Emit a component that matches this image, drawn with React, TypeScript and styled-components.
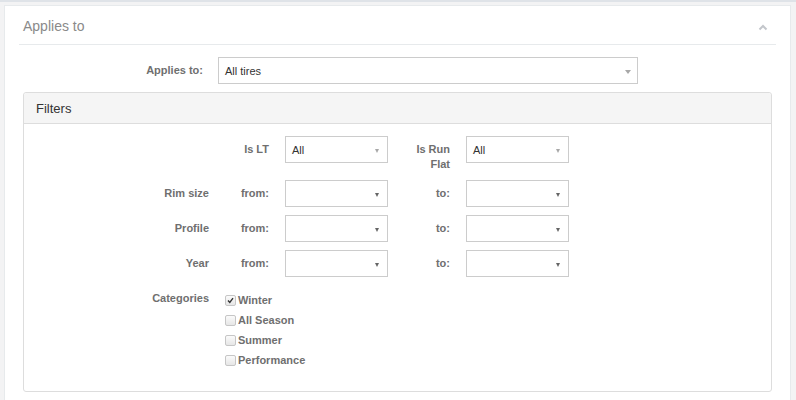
import React from 'react';
import styled, { createGlobalStyle } from 'styled-components';

const GlobalStyle = createGlobalStyle`
  html, body {
    margin: 0;
    padding: 0;
    background: #f3f3f4;
    font-family: "Liberation Sans", Arial, sans-serif;
  }
`;

const Page = styled.div`
  border-top: 2px solid #dfe3e8;
  padding: 3px 5px 0 4px;
  height: 395px;
  overflow: hidden;
`;

const Card = styled.div`
  background: #fff;
  border: 1px solid #e7eaec;
  padding: 0 14px;
  height: 420px;
`;

const CardHeader = styled.div`
  display: flex;
  align-items: center;
  justify-content: space-between;
  box-sizing: border-box;
  height: 39px;
  padding: 2px 4px 0;
  border-bottom: 1px solid #e7eaec;
`;

const CardTitle = styled.h5`
  margin: 0;
  font-size: 14px;
  font-weight: normal;
  color: #8a8a8a;
`;

const Collapse = styled.span`
  display: flex;
  margin-right: 4px;
  margin-top: 2px;
`;

const MainRow = styled.div`
  display: grid;
  grid-template-columns: 184px 420px;
  column-gap: 15px;
  align-items: center;
  margin-top: 12px;
`;

const Label = styled.label<{ $top?: boolean }>`
  font-size: 11px;
  font-weight: bold;
  color: #6f6f6f;
  text-align: right;
  line-height: 15px;
  padding-top: ${(p) => (p.$top ? '6px' : '0')};
`;

const SelectBox = styled.div`
  position: relative;
  box-sizing: border-box;
  height: 27px;
  border: 1px solid #ccc;
  background: #fff;
  display: flex;
  align-items: center;
  padding: 0 6px;
  font-size: 11px;
  color: #333;
`;

const Caret = styled.span<{ $light?: boolean; $wide?: boolean }>`
  position: absolute;
  right: ${(p) => (p.$wide ? '6px' : '8px')};
  top: 50%;
  margin-top: -1px;
  width: 0;
  height: 0;
  border-left: ${(p) => (p.$wide ? '3.5px' : '2.5px')} solid transparent;
  border-right: ${(p) => (p.$wide ? '3.5px' : '2.5px')} solid transparent;
  border-top: 4px solid ${(p) => (p.$light ? '#a8a8a8' : '#666')};
`;

const Panel = styled.div`
  margin: 8px 4px 0;
  border: 1px solid #ddd;
  border-radius: 3px;
  background: #fff;
`;

const PanelHeading = styled.div`
  height: 30px;
  background: #f5f5f5;
  border-bottom: 1px solid #ddd;
  border-radius: 3px 3px 0 0;
  display: flex;
  align-items: center;
  padding-left: 12px;
  font-size: 13px;
  color: #333;
`;

const PanelBody = styled.div`
  display: grid;
  grid-template-columns: 185px 44px 103px 46px 103px;
  column-gap: 16px;
  row-gap: 8px;
  padding: 12px 0 21px;
  align-items: start;
`;

const CheckList = styled.div`
  grid-column: 2 / span 4;
  padding-top: 5px;
`;

const CheckItem = styled.label`
  display: flex;
  align-items: center;
  height: 20px;
  font-size: 11px;
  font-weight: bold;
  color: #6f6f6f;
`;

const Box = styled.span`
  box-sizing: border-box;
  width: 11px;
  height: 11px;
  border: 1px solid #c6c6c6;
  border-radius: 2px;
  background: linear-gradient(#fbfbfb, #e6e6e6);
  margin-right: 2px;
  display: flex;
  align-items: center;
  justify-content: center;
`;

const Select = ({ value, light }: { value?: string; light?: boolean }) => (
  <SelectBox>
    {value}
    <Caret $light={light} />
  </SelectBox>
);

const Checkbox = ({ label, checked }: { label: string; checked?: boolean }) => (
  <CheckItem>
    <Box>
      {checked && (
        <svg width="7" height="7" viewBox="0 0 7 7">
          <path d="M1 3.6 L2.8 5.5 L6 1.2" fill="none" stroke="#333" strokeWidth="1.4" />
        </svg>
      )}
    </Box>
    {label}
  </CheckItem>
);

const rangeRows = ['Rim size', 'Profile', 'Year'];

export default function App() {
  return (
    <>
      <GlobalStyle />
      <Page>
        <Card>
          <CardHeader>
            <CardTitle>Applies to</CardTitle>
            <Collapse>
              <svg width="10" height="7" viewBox="0 0 10 7">
                <polyline points="1.5,5.5 5,2 8.5,5.5" fill="none" stroke="#c3c6cb" strokeWidth="2" />
              </svg>
            </Collapse>
          </CardHeader>

          <MainRow>
            <Label>Applies to:</Label>
            <SelectBox>
              All tires
              <Caret $wide $light />
            </SelectBox>
          </MainRow>

          <Panel>
            <PanelHeading>Filters</PanelHeading>
            <PanelBody>
              <span />
              <Label $top>Is LT</Label>
              <Select value="All" light />
              <Label $top>
                Is Run
                <br />
                Flat
              </Label>
              <Select value="All" light />

              {rangeRows.map((name) => (
                <React.Fragment key={name}>
                  <Label $top>{name}</Label>
                  <Label $top>from:</Label>
                  <Select />
                  <Label $top>to:</Label>
                  <Select />
                </React.Fragment>
              ))}

              <Label $top>Categories</Label>
              <CheckList>
                <Checkbox label="Winter" checked />
                <Checkbox label="All Season" />
                <Checkbox label="Summer" />
                <Checkbox label="Performance" />
              </CheckList>
            </PanelBody>
          </Panel>
        </Card>
      </Page>
    </>
  );
}
